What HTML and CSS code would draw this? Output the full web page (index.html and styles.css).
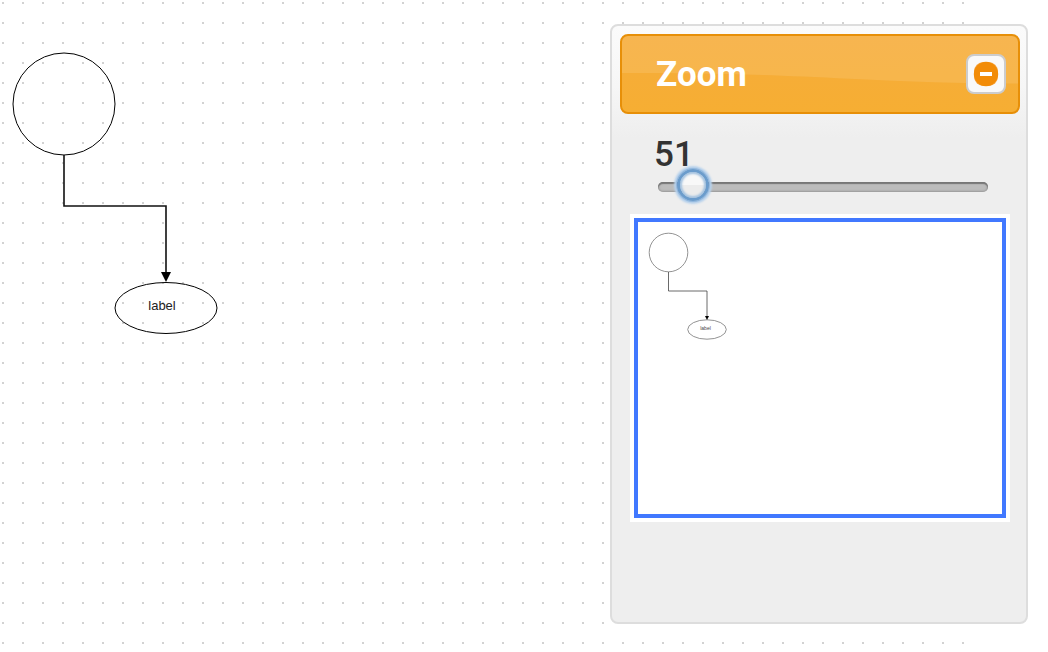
FILE: index.html
```
<!DOCTYPE html>
<html lang="en">
<head>
<meta charset="utf-8">
<title>Diagram editor</title>
<link rel="stylesheet" href="styles.css">
</head>
<body>
<main class="editor">
  <div class="canvas">
    <svg class="diagram" viewBox="0 0 240 350" width="240" height="350" role="img" aria-label="Diagram">
      <g fill="none" stroke="#000">
        <circle cx="64" cy="104" r="51"/>
        <ellipse cx="166" cy="308" rx="51" ry="25.5"/>
        <path d="M64 155V206H166V273" stroke="#111" stroke-width="1.6"/>
      </g>
      <path d="M161 272h10l-5 10z"/>
      <text class="node-label" x="162" y="310" text-anchor="middle">label</text>
    </svg>
  </div>
  <aside class="panel">
    <header class="panel-header">
      <svg class="gloss" viewBox="0 0 400 80" preserveAspectRatio="none" aria-hidden="true">
        <path d="M0 0H400V50C340 50 290 48 230 45C140 40 80 39 0 39z" fill="#fff" fill-opacity=".11"/>
      </svg>
      <h1 class="title">Zoom</h1>
      <button class="toggle" type="button" aria-label="Collapse">
        <svg viewBox="0 0 26 26" width="26" height="26" aria-hidden="true">
          <rect x="1" y="1" width="24" height="24" rx="9.5" fill="#f6a94a"/>
          <circle cx="13" cy="13" r="12.2" fill="#f28c08"/>
          <path d="M7 11H19V15H7z" fill="#fff"/>
        </svg>
      </button>
    </header>
    <div class="zoom-control">
      <label class="zoom-value" for="zoom">51</label>
      <input class="slider" id="zoom" type="range" min="20" max="500" value="51">
    </div>
    <div class="minimap">
      <svg class="mini-diagram" viewBox="0 0 364 292" role="img" aria-label="Overview">
        <g fill="none" stroke="#777" stroke-width=".8">
          <circle cx="30.5" cy="30.5" r="19.3"/>
          <ellipse cx="69" cy="107.5" rx="19.3" ry="9.7"/>
          <path d="M30.5 50V69H69V95" stroke="#444"/>
        </g>
        <path d="M67 94h4l-2 4z"/>
        <text class="mini-label" x="67.5" y="108" text-anchor="middle">label</text>
      </svg>
    </div>
  </aside>
</main>
</body>
</html>
```
FILE: styles.css
```
* { box-sizing: border-box; }
body { margin: 0; background: #fff; font-family: Roboto, "Liberation Sans", sans-serif; }
.editor { display: grid; min-height: 100vh; }
.canvas, .panel { grid-area: 1 / 1; }
.canvas {
  margin-right: 82px;
  background-image: conic-gradient(from 90deg at 18px 18px, #d2d2d2 90deg, transparent 0);
  background-size: 20px 20px;
  background-position: 4px 4px;
}
.diagram { display: block; }
.node-label { font: 13px "Liberation Sans", Arial, sans-serif; fill: #222; }
.panel {
  justify-self: end;
  align-self: start;
  width: 418px;
  min-height: 600px;
  margin: 24px 20px 28px;
  padding: 8px 6px 8px 8px;
  border: 2px solid #ddd;
  border-radius: 8px;
  background: linear-gradient(#fbfbfb, #f6f6f6 60px, #eee 112px, #eee);
}
.panel-header {
  position: relative;
  display: grid;
  grid-template-columns: 1fr auto;
  align-items: center;
  min-height: 80px;
  padding: 0 12px 0 34px;
  border: 2px solid #e78f08;
  border-radius: 8px;
  background: linear-gradient(#f6ac3b, #f6ae33);
}
.gloss { position: absolute; inset: 0; width: 100%; height: 100%; border-radius: 6px; }
.title {
  position: relative;
  margin: 0;
  padding-top: 2px;
  font-size: 35px;
  line-height: 40px;
  font-weight: 700;
  color: #fff;
}
.toggle {
  position: relative;
  display: grid;
  place-items: center;
  width: 40px;
  height: 40px;
  padding: 0;
  border: 2px solid #ccc;
  border-radius: 8px;
  background: #f9f9f9;
}
.zoom-control { display: grid; margin: 20px 32px 0 38px; }
.zoom-value { height: 31px; margin-left: -4px; font-size: 35px; line-height: 42px; font-weight: 500; color: #333; }
.slider {
  appearance: none;
  width: 100%;
  height: 44px;
  margin: 0;
  background: transparent;
}
.slider::-webkit-slider-runnable-track {
  height: 10px;
  border-radius: 5px;
  background: #bcbcbc;
  box-shadow: inset 0 2px 1px #777, inset 0 0 2px 1px #999;
}
.slider::-webkit-slider-thumb {
  appearance: none;
  width: 32px;
  height: 32px;
  margin-top: -13px;
  border: 3px solid #6b9ccc;
  border-radius: 50%;
  background: linear-gradient(#f8f8f8 50%, #ececec 50%) padding-box;
  box-shadow: 0 0 1px 1px #8db4dc, 0 0 2px 3px #b8d2ec, inset 0 0 2px 2px #a5c3e0;
}
.minimap {
  margin: 5px 10px 0;
  padding: 4px;
  background: #fff;
}
.mini-diagram { display: block; width: 100%; border: 4px solid #4178ff; }
.mini-label { font: 5px "Liberation Sans", Arial, sans-serif; fill: #444; }
```
